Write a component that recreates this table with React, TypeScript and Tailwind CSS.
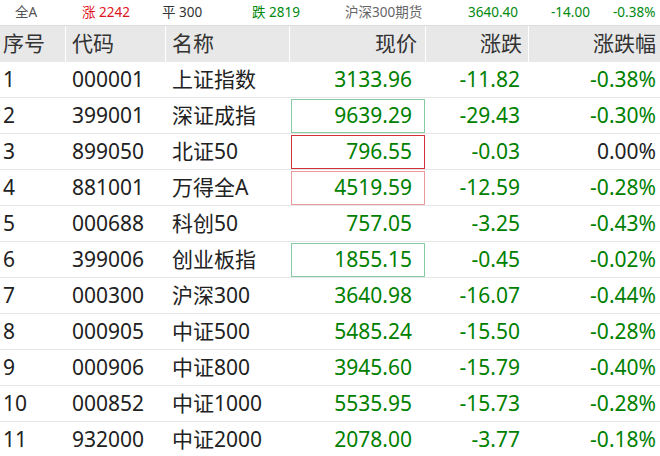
import React from "react";

type Row = {
  no: number;
  code: string;
  name: string;
  price: string;
  change: string;
  pct: string;
  box?: "green" | "red" | "pink";
  flat?: boolean;
};

const rows: Row[] = [
  { no: 1, code: "000001", name: "上证指数", price: "3133.96", change: "-11.82", pct: "-0.38%" },
  { no: 2, code: "399001", name: "深证成指", price: "9639.29", change: "-29.43", pct: "-0.30%", box: "green" },
  { no: 3, code: "899050", name: "北证50", price: "796.55", change: "-0.03", pct: "0.00%", box: "red", flat: true },
  { no: 4, code: "881001", name: "万得全A", price: "4519.59", change: "-12.59", pct: "-0.28%", box: "pink" },
  { no: 5, code: "000688", name: "科创50", price: "757.05", change: "-3.25", pct: "-0.43%" },
  { no: 6, code: "399006", name: "创业板指", price: "1855.15", change: "-0.45", pct: "-0.02%", box: "green" },
  { no: 7, code: "000300", name: "沪深300", price: "3640.98", change: "-16.07", pct: "-0.44%" },
  { no: 8, code: "000905", name: "中证500", price: "5485.24", change: "-15.50", pct: "-0.28%" },
  { no: 9, code: "000906", name: "中证800", price: "3945.60", change: "-15.79", pct: "-0.40%" },
  { no: 10, code: "000852", name: "中证1000", price: "5535.95", change: "-15.73", pct: "-0.28%" },
  { no: 11, code: "932000", name: "中证2000", price: "2078.00", change: "-3.77", pct: "-0.18%" },
];

const boxStyles = {
  green: "border-[#86cca2]",
  red: "border-[#d3323a]",
  pink: "border-[#ea9b9e]",
};

const cols = "grid grid-cols-[65px_100px_124px_136px_103px_1fr]";

function TopBar() {
  return (
    <div className="flex h-[26px] items-center border-b border-[#dcdcdc] pl-[15px] text-[13.5px] text-[#555]">
      <div className="w-[67px]">全A</div>
      <div className="w-[80px] text-[#e0141e]">涨 2242</div>
      <div className="w-[90px] text-[#333]">平 300</div>
      <div className="w-[93px] text-[#008a10]">跌 2819</div>
      <div className="w-[123px] text-[#666]">沪深300期货</div>
      <div className="w-[83px] text-[#008a10]">3640.40</div>
      <div className="w-[62px] text-[#008a10]">-14.00</div>
      <div className="text-[#008a10]">-0.38%</div>
    </div>
  );
}

function Header() {
  return (
    <div className={cols + " h-[36px] items-center bg-[#e8e8e8] text-[21px] text-[#333]"}>
      <div className="flex h-full items-center pl-[3px]">序号</div>
      <div className="flex h-full items-center border-l border-white pl-[6px]">代码</div>
      <div className="flex h-full items-center border-l border-white pl-[6px]">名称</div>
      <div className="flex h-full items-center justify-end border-l border-white pr-[8px]">现价</div>
      <div className="flex h-full items-center justify-end border-l border-white pr-[6px]">涨跌</div>
      <div className="flex h-full items-center justify-end border-l border-white pr-[4px]">涨跌幅</div>
    </div>
  );
}

function QuoteRow({ row }: { row: Row }) {
  return (
    <div className={cols + " h-[36px] border-b border-[#e6e6e6] text-[21px] text-[#222]"}>
      <div className="flex items-center pl-[3px]">{row.no}</div>
      <div className="flex items-center pl-[7px]">{row.code}</div>
      <div className="flex items-center pl-[7px]">{row.name}</div>
      <div className="flex pt-px pl-[2px]">
        <div className={"flex flex-1 items-center justify-end border pr-[12px] text-[#008000] " + (row.box ? boxStyles[row.box] : "border-transparent")}>
          {row.price}
        </div>
      </div>
      <div className="flex items-center justify-end pr-[8px] text-[#008000]">{row.change}</div>
      <div className={"flex items-center justify-end pr-[4px] " + (row.flat ? "text-[#222]" : "text-[#008000]")}>{row.pct}</div>
    </div>
  );
}

export default function App() {
  return (
    <div className="h-[456px] w-[660px] overflow-hidden bg-white font-['Noto_Sans','Noto_Sans_CJK_SC',sans-serif]">
      <TopBar />
      <Header />
      {rows.map(r => <QuoteRow key={r.no} row={r} />)}
    </div>
  );
}
